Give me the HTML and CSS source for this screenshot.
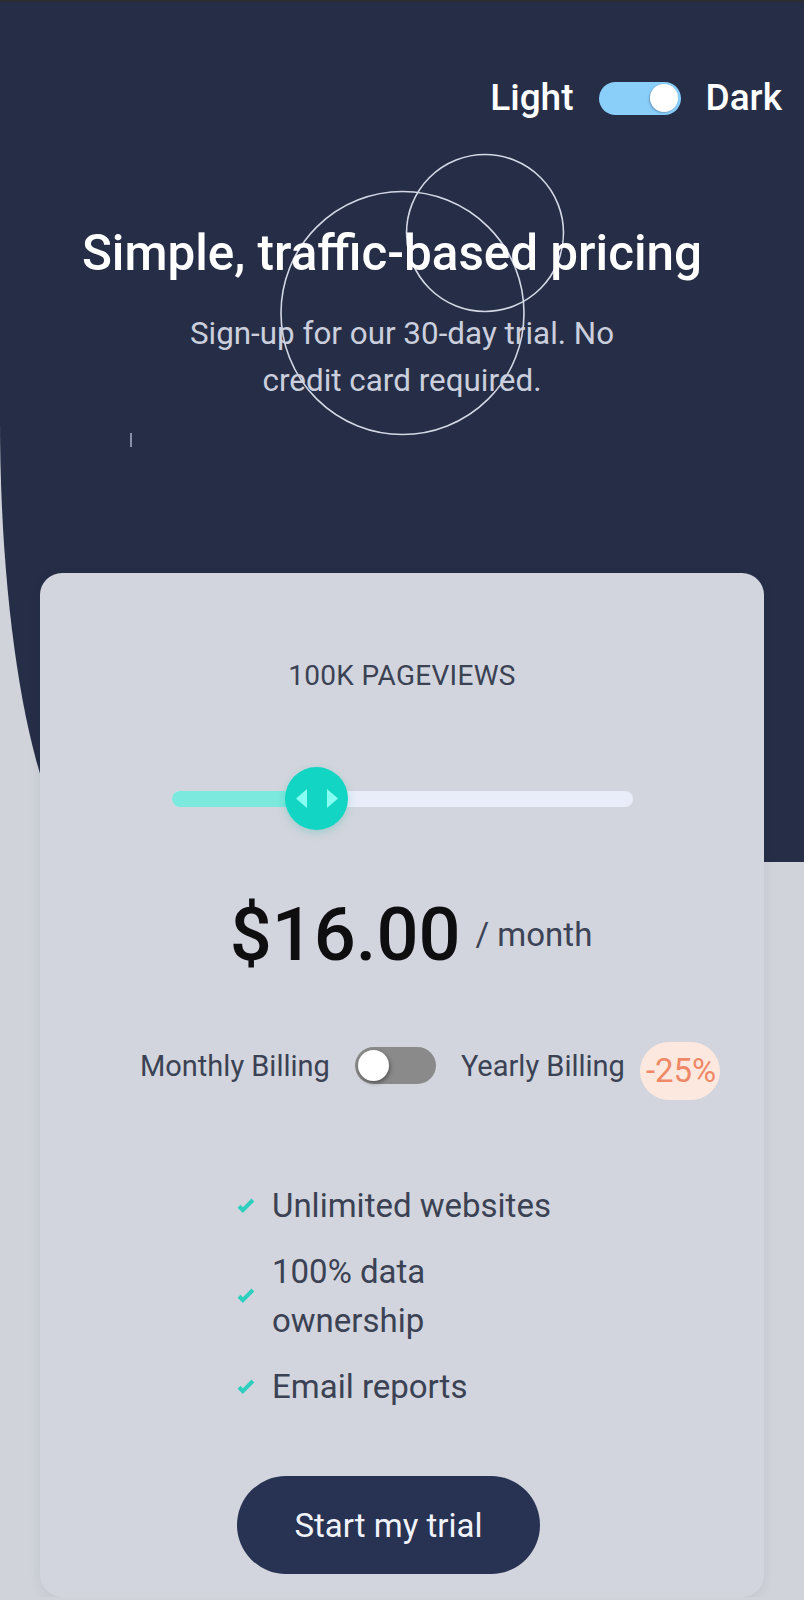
FILE: index.html
```html
<!DOCTYPE html>
<html lang="en">
<head>
<meta charset="utf-8">
<title>Pricing</title>
<link rel="stylesheet" href="styles.css">
</head>
<body>
<header class="hero">
  <div class="topbar"></div>
  <svg class="deco" width="804" height="862" viewBox="0 0 804 862" aria-hidden="true">
    <circle cx="485" cy="233" r="78.5" fill="none" stroke="#d4d8e6" stroke-width="1.6"/>
    <circle cx="402.5" cy="313" r="121.5" fill="none" stroke="#d4d8e6" stroke-width="1.6"/>
    <line x1="131" y1="433" x2="131" y2="447" stroke="#a2aac0" stroke-width="2" opacity="0.8"/>
  </svg>
  <div class="theme-row">
    <span class="theme-label">Light</span>
    <span class="theme-switch"><span class="theme-knob"></span></span>
    <span class="theme-label">Dark</span>
  </div>
  <h1 class="title">Simple, traffic-based pricing</h1>
  <p class="subtitle">Sign-up for our 30-day trial. No credit card required.</p>
</header>

<main class="card">
  <div class="views">100K PAGEVIEWS</div>

  <div class="slider">
    <div class="track">
      <div class="fill" style="width: 144px"></div>
      <div class="thumb" style="left: 112.5px">
        <svg width="63" height="63" viewBox="0 0 63 63" aria-hidden="true">
          <polygon points="22,22 22,41 11,31.5" fill="#88fff3"/>
          <polygon points="42,22 42,41 53,31.5" fill="#88fff3"/>
        </svg>
      </div>
    </div>
  </div>

  <div class="price-row">
    <span class="price">$16.00</span>
    <span class="period">/ month</span>
  </div>

  <div class="billing">
    <span class="billing-label">Monthly Billing</span>
    <span class="bill-switch"><span class="bill-knob"></span></span>
    <span class="billing-label">Yearly Billing</span>
    <span class="badge">-25%</span>
  </div>

  <div class="bottom">
    <ul class="features">
      <li class="feature">
        <svg class="check" width="18" height="16" viewBox="0 0 9 8" aria-hidden="true"><path d="M1 4.134l1.907 1.908L7.949 1" fill="none" stroke="#2fcfbf" stroke-width="2"/></svg>
        <span>Unlimited websites</span>
      </li>
      <li class="feature">
        <svg class="check" width="18" height="16" viewBox="0 0 9 8" aria-hidden="true"><path d="M1 4.134l1.907 1.908L7.949 1" fill="none" stroke="#2fcfbf" stroke-width="2"/></svg>
        <span>100% data ownership</span>
      </li>
      <li class="feature">
        <svg class="check" width="18" height="16" viewBox="0 0 9 8" aria-hidden="true"><path d="M1 4.134l1.907 1.908L7.949 1" fill="none" stroke="#2fcfbf" stroke-width="2"/></svg>
        <span>Email reports</span>
      </li>
    </ul>
    <button class="cta">Start my trial</button>
  </div>
</main>
</body>
</html>
```

FILE: styles.css
```css
* { box-sizing: border-box; }

body {
  margin: 0;
  background: #d0d3da;
  font-family: "Roboto", "Liberation Sans", sans-serif;
  color: #3b4254;
}

.hero {
  position: relative;
  height: 862px;
  background: #252e46;
  border-bottom-left-radius: 100px 442px;
  overflow: hidden;
}

.topbar {
  height: 2px;
  background: #2b2d33;
}

.deco {
  position: absolute;
  left: 0;
  top: 0;
}

.theme-row {
  position: relative;
  display: flex;
  justify-content: flex-end;
  align-items: center;
  gap: 25px;
  height: 42px;
  margin-top: 75px;
  padding-right: 22px;
}

.theme-label {
  font-size: 37px;
  font-weight: 500;
  color: #ffffff;
  line-height: 42px;
}

.theme-switch {
  display: flex;
  align-items: center;
  justify-content: flex-end;
  width: 82px;
  height: 33px;
  padding: 0 3px;
  border-radius: 17px;
  background: #8acffa;
}

.theme-knob {
  width: 28px;
  height: 28px;
  border-radius: 50%;
  background: #ffffff;
  box-shadow: -1px 1px 2px rgba(40, 60, 90, 0.35);
}

.title {
  position: relative;
  margin: 104px 0 0;
  padding-right: 20px;
  text-align: center;
  font-size: 49.4px;
  line-height: 60px;
  font-weight: 500;
  color: #ffffff;
}

.subtitle {
  position: relative;
  width: 470px;
  margin: 27px auto 0;
  text-align: center;
  font-size: 31.4px;
  line-height: 47px;
  color: #cbcfdd;
}

.card {
  position: relative;
  margin: -289px 40px 0;
  padding: 88px 0 23px;
  background: #d2d5dd;
  border-radius: 22px;
  box-shadow: 0 3px 12px rgba(30, 40, 70, 0.08);
}

.views {
  text-align: center;
  font-size: 28px;
  line-height: 30px;
  letter-spacing: 0.3px;
  color: #3b4254;
}

.slider {
  display: flex;
  align-items: center;
  height: 63px;
  margin: 76px 131px 0 132px;
}

.track {
  position: relative;
  width: 100%;
  height: 16px;
  border-radius: 8px;
  background: #e9ecf9;
}

.fill {
  height: 100%;
  border-radius: 8px 0 0 8px;
  background: #7be9dd;
}

.thumb {
  position: absolute;
  top: -23.5px;
  width: 63px;
  height: 63px;
  border-radius: 50%;
  background: #12d5c3;
  box-shadow: 0 3px 8px rgba(16, 180, 165, 0.25);
}

.thumb svg { display: block; }

.price-row {
  display: flex;
  justify-content: center;
  align-items: center;
  gap: 15px;
  margin-top: 65px;
  padding-left: 18px;
}

.price {
  font-size: 74px;
  line-height: 80px;
  font-weight: 500;
  color: #0e0e10;
}

.period {
  font-size: 33px;
  line-height: 36px;
  color: #3d4356;
}

.billing {
  display: flex;
  align-items: center;
  gap: 25px;
  height: 57px;
  margin-top: 62px;
  padding-left: 100px;
}

.billing-label {
  font-size: 29px;
  line-height: 34px;
  color: #3b4254;
}

.bill-switch {
  display: flex;
  align-items: center;
  width: 81px;
  height: 37px;
  padding: 0 3px;
  border-radius: 19px;
  background: #8a8a8a;
}

.bill-knob {
  width: 31px;
  height: 31px;
  border-radius: 50%;
  background: #ffffff;
  box-shadow: 1px 2px 4px rgba(0, 0, 0, 0.4);
}

.badge {
  display: flex;
  align-items: center;
  width: 80px;
  height: 58px;
  margin-left: -10px;
  margin-top: 10px;
  padding-left: 6px;
  border-radius: 29px;
  background: #fde8df;
  color: #ee8866;
  font-size: 33px;
  white-space: nowrap;
}

.bottom {
  width: 330px;
  margin: 87px auto 0;
}

.features {
  list-style: none;
  margin: 0;
  padding: 0;
  display: flex;
  flex-direction: column;
  gap: 17px;
}

.feature {
  display: flex;
  align-items: center;
  gap: 17px;
  font-size: 33px;
  line-height: 49px;
  color: #3b4254;
}

.check {
  flex: none;
  display: block;
}

.cta {
  display: flex;
  align-items: center;
  justify-content: center;
  width: 303px;
  height: 98px;
  margin-top: 65px;
  border: none;
  border-radius: 49px;
  background: #283252;
  color: #f1f3fb;
  font-family: "Roboto", "Liberation Sans", sans-serif;
  font-size: 33px;
  padding: 0;
}
```
